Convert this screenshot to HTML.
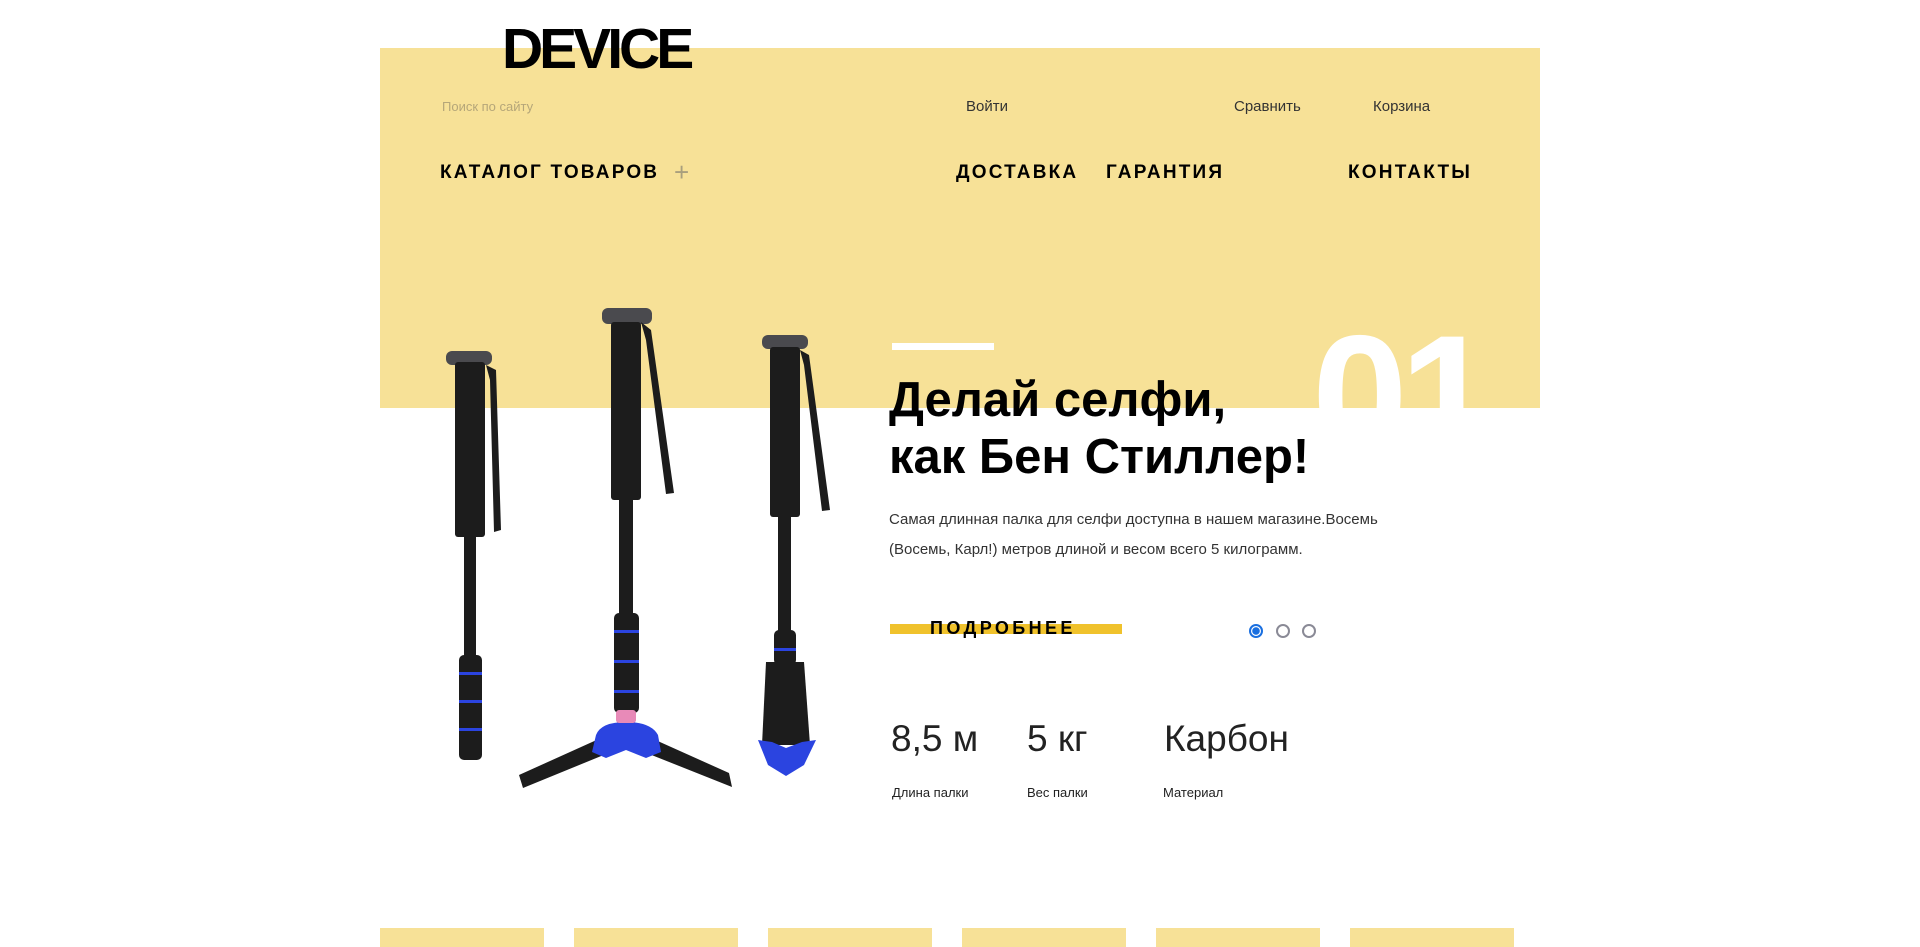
<!DOCTYPE html>
<html><head><meta charset="utf-8"><style>
*{margin:0;padding:0;box-sizing:border-box}
body{width:1920px;height:947px;background:#fff;position:relative;overflow:hidden;font-family:"Liberation Sans",sans-serif;color:#000}
.a{position:absolute;white-space:nowrap}
.yb{position:absolute;left:380px;top:48px;width:1160px;height:360px;background:#f7e197}
.nav{font-weight:bold;font-size:19px;letter-spacing:2.2px;top:162px;line-height:22px}
.sm{font-size:15px;color:#333;top:98px}
.dot{position:absolute;top:624px;width:14px;height:14px;border-radius:50%;border:2px solid #8a8a96}
.bt{position:absolute;top:928px;width:164px;height:19px;background:#f7e197}
</style></head><body>
<div class="yb"></div>
<div class="a" style="left:502px;top:14px;font-size:57px;font-weight:bold;letter-spacing:-4px;line-height:70px">DEVICE</div>
<div class="a" style="left:442px;top:99px;font-size:13px;color:#b5a679">Поиск по сайту</div>
<div class="a sm" style="left:966px">Войти</div>
<div class="a sm" style="left:1234px">Сравнить</div>
<div class="a sm" style="left:1373px">Корзина</div>
<div class="a nav" style="left:440px">КАТАЛОГ ТОВАРОВ</div>
<div class="a" style="left:674px;top:157px;font-size:26px;line-height:30px;color:#a99f7d">+</div>
<div class="a nav" style="left:956px">ДОСТАВКА</div>
<div class="a nav" style="left:1106px">ГАРАНТИЯ</div>
<div class="a nav" style="left:1348px">КОНТАКТЫ</div>
<div class="a" style="left:1312px;top:327px;width:200px;height:81px;overflow:hidden">
 <div style="position:absolute;left:0;top:-17px;font-size:172px;line-height:172px;font-weight:bold;color:#fff;letter-spacing:-8px">01</div>
</div>
<div class="a" style="left:892px;top:343px;width:102px;height:7px;background:#fff"></div>
<div class="a" style="left:889px;top:372px;font-size:49px;font-weight:bold;line-height:57px">Делай селфи,<br>как Бен Стиллер!</div>
<div class="a" style="left:889px;top:505px;font-size:15px;line-height:30px;color:#333">Самая длинная палка для селфи доступна в нашем магазине.Восемь<br>(Восемь, Карл!) метров длиной и весом всего 5 килограмм.</div>
<div class="a" style="left:890px;top:624px;width:232px;height:10px;background:#f0c22c"></div>
<div class="a" style="left:930px;top:618px;font-size:18px;font-weight:bold;letter-spacing:3.4px;line-height:20px">ПОДРОБНЕЕ</div>
<div class="dot" style="left:1249px;border-color:#1a6fe0;background:radial-gradient(circle,#1a6fe0 0 3.5px,#fff 4px)"></div>
<div class="dot" style="left:1276px"></div>
<div class="dot" style="left:1302px"></div>
<div class="a" style="left:891px;top:718px;font-size:37px;color:#222">8,5 м</div>
<div class="a" style="left:1027px;top:718px;font-size:37px;color:#222">5 кг</div>
<div class="a" style="left:1164px;top:718px;font-size:37px;color:#222">Карбон</div>
<div class="a" style="left:892px;top:785px;font-size:13px;color:#222">Длина палки</div>
<div class="a" style="left:1027px;top:785px;font-size:13px;color:#222">Вес палки</div>
<div class="a" style="left:1163px;top:785px;font-size:13px;color:#222">Материал</div>
<div class="bt" style="left:380px"></div><div class="bt" style="left:574px"></div><div class="bt" style="left:768px"></div><div class="bt" style="left:962px"></div><div class="bt" style="left:1156px"></div><div class="bt" style="left:1350px"></div>
<svg class="a" style="left:-4px;top:0" width="1920" height="947">
<g fill="#1c1c1c">
 <rect x="450" y="351" width="46" height="14" rx="6" fill="#4a4a4e"/>
 <rect x="459" y="362" width="30" height="175" rx="3"/>
 <path d="M490 365 L500 370 L505 530 L498 532 L494 380Z"/>
 <rect x="468" y="537" width="12" height="120"/>
 <rect x="463" y="655" width="23" height="105" rx="5"/>
 <rect x="606" y="308" width="50" height="16" rx="6" fill="#4a4a4e"/>
 <rect x="615" y="322" width="30" height="178" rx="3"/>
 <path d="M645 322 L655 330 L678 493 L670 494 L650 340Z"/>
 <rect x="623" y="500" width="14" height="115"/>
 <rect x="618" y="613" width="25" height="100" rx="5"/>
 <path d="M605 738 L523 775 L527 788 L615 752Z"/>
 <path d="M655 738 L733 773 L736 787 L648 752Z"/>
 <rect x="766" y="335" width="46" height="14" rx="6" fill="#4a4a4e"/>
 <rect x="774" y="347" width="30" height="170" rx="3"/>
 <path d="M804 350 L813 355 L834 510 L826 511 L808 365Z"/>
 <rect x="782" y="517" width="13" height="115"/>
 <rect x="778" y="630" width="22" height="35" rx="5"/>
 <path d="M770 662 L808 662 L814 745 L766 745Z"/>
</g>
<g fill="#2b44e0">
 <rect x="463" y="672" width="23" height="3"/><rect x="463" y="700" width="23" height="3"/><rect x="463" y="728" width="23" height="3"/>
 <rect x="618" y="630" width="25" height="3"/><rect x="618" y="660" width="25" height="3"/><rect x="618" y="690" width="25" height="3"/>
 <path d="M600 735 Q605 722 630 722 Q655 722 662 735 L665 752 L650 758 L630 750 L610 758 L596 752Z"/>
 <path d="M762 740 L772 765 L790 776 L808 765 L820 740 L806 742 L790 748 L776 742Z"/>
 <rect x="778" y="648" width="22" height="3"/>
</g>
<rect x="620" y="710" width="20" height="13" rx="3" fill="#e88ab8"/>
</svg>
</body></html>
